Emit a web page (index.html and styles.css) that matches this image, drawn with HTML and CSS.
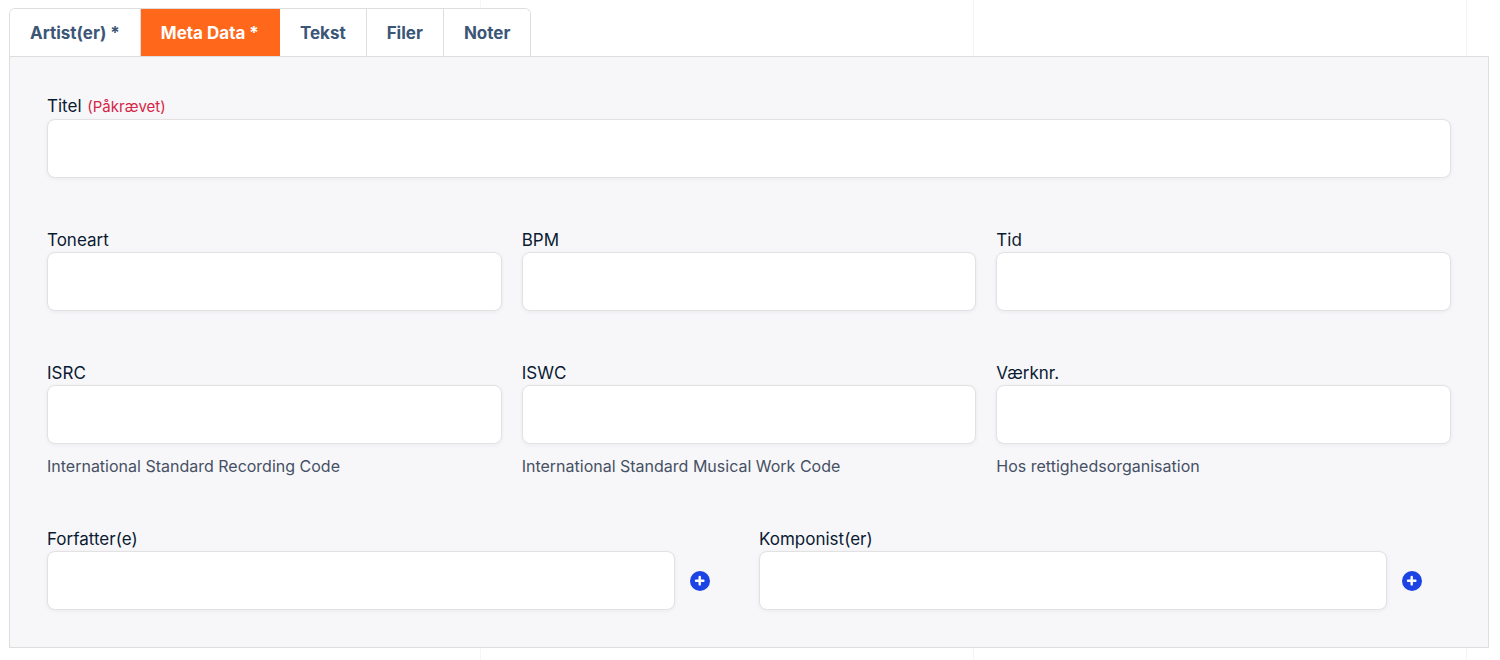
FILE: index.html
```html
<!DOCTYPE html>
<html lang="da">
<head>
<meta charset="utf-8">
<meta name="viewport" content="width=device-width, initial-scale=1">
<title>Meta Data</title>
<link rel="stylesheet" href="styles.css">
</head>
<body>
<main class="page">
  <div class="tabs" role="tablist">
    <button class="tab" type="button" role="tab" aria-selected="false">Artist(er) *</button>
    <button class="tab tab-active" type="button" role="tab" aria-selected="true" aria-controls="meta">Meta Data *</button>
    <button class="tab" type="button" role="tab" aria-selected="false">Tekst</button>
    <button class="tab" type="button" role="tab" aria-selected="false">Filer</button>
    <button class="tab" type="button" role="tab" aria-selected="false">Noter</button>
  </div>
  <form class="panel" id="meta">
    <div class="field">
      <label class="label" for="titel">Titel <span class="required">(Påkrævet)</span></label>
      <input class="input" id="titel" type="text" required>
    </div>
    <div class="row thirds">
      <div class="field">
        <label class="label" for="toneart">Toneart</label>
        <input class="input" id="toneart" type="text">
      </div>
      <div class="field">
        <label class="label" for="bpm">BPM</label>
        <input class="input" id="bpm" type="text">
      </div>
      <div class="field">
        <label class="label" for="tid">Tid</label>
        <input class="input" id="tid" type="text">
      </div>
    </div>
    <div class="row thirds">
      <div class="field">
        <label class="label" for="isrc">ISRC</label>
        <input class="input" id="isrc" type="text" aria-describedby="isrc-hint">
        <p class="hint" id="isrc-hint">International Standard Recording Code</p>
      </div>
      <div class="field">
        <label class="label" for="iswc">ISWC</label>
        <input class="input" id="iswc" type="text" aria-describedby="iswc-hint">
        <p class="hint" id="iswc-hint">International Standard Musical Work Code</p>
      </div>
      <div class="field">
        <label class="label" for="work">Værknr.</label>
        <input class="input" id="work" type="text" aria-describedby="work-hint">
        <p class="hint" id="work-hint">Hos rettighedsorganisation</p>
      </div>
    </div>
    <div class="row halves">
      <div class="field">
        <label class="label" for="author">Forfatter(e)</label>
        <div class="list-item">
          <input class="input" id="author" type="text">
          <button class="add" type="button" aria-label="Tilføj forfatter">
            <svg class="add-icon" viewBox="0 0 20 20" aria-hidden="true"><circle cx="10" cy="10" r="10" fill="#1c43e4"/><path d="M9.7 6v7.4M6 9.7h7.4" stroke="#fff" stroke-width="2.4" stroke-linecap="round"/></svg>
          </button>
        </div>
      </div>
      <div class="field">
        <label class="label" for="composer">Komponist(er)</label>
        <div class="list-item">
          <input class="input" id="composer" type="text">
          <button class="add" type="button" aria-label="Tilføj komponist">
            <svg class="add-icon" viewBox="0 0 20 20" aria-hidden="true"><circle cx="10" cy="10" r="10" fill="#1c43e4"/><path d="M9.7 6v7.4M6 9.7h7.4" stroke="#fff" stroke-width="2.4" stroke-linecap="round"/></svg>
          </button>
        </div>
      </div>
    </div>
  </form>
</main>
</body>
</html>
```
FILE: styles.css
```css
* {
  box-sizing: border-box;
}

body {
  margin: 0;
  font-family: Inter, "Liberation Sans", sans-serif;
  color: #0b1a33;
  background-color: #fff;
}

/* Faint vertical column guides behind the form */
.page {
  min-height: 100vh;
  padding: 8px 11px 12px 9px;
  background-image:
    linear-gradient(#f5f5f5, #f5f5f5),
    linear-gradient(#f5f5f5, #f5f5f5),
    linear-gradient(#f5f5f5, #f5f5f5);
  background-repeat: no-repeat;
  background-size: 1px 100%;
  background-position: 32% 0, 64.9% 0, 97.8% 0;
}

.tabs {
  display: flex;
  width: fit-content;
  border: 1px solid #dedede;
  border-bottom: 0;
  border-radius: 6px 6px 0 0;
  overflow: hidden;
  background: #fff;
}

.tab {
  padding: 2px 20px 0;
  border: 0;
  border-right: 1px solid #dedede;
  background: #fff;
  color: #3b5676;
  font: 700 17px/45px Inter, "Liberation Sans", sans-serif;
  cursor: pointer;
}

.tab:last-child {
  border-right: 0;
}

.tab-active {
  border-color: #ff681a;
  background: #ff681a;
  color: #fff;
}

.panel {
  display: flex;
  flex-direction: column;
  gap: 50px;
  padding: 37px;
  border: 1px solid #dedede;
  background: #f7f7f9;
}

.row {
  display: grid;
  gap: 20px;
}

.thirds {
  grid-template-columns: repeat(3, 1fr);
}

.halves {
  grid-template-columns: repeat(2, 1fr);
}

.field {
  display: flex;
  flex-direction: column;
  min-width: 0;
}

.label {
  font-size: 17px;
  line-height: 24px;
}

.required {
  margin-left: 1px;
  color: #d62545;
  font-size: 15px;
}

.input {
  width: 100%;
  min-width: 0;
  height: 59px;
  padding: 0 16px;
  border: 1px solid #e2e2e3;
  border-radius: 8px;
  background: #fff;
  box-shadow: 0 1px 4px rgba(18, 25, 97, 0.06);
  color: inherit;
  font: inherit;
}

.hint {
  margin: 11px 0 0;
  color: #465064;
  font-size: 16px;
  line-height: 22px;
}

.list-item {
  display: flex;
  align-items: center;
  gap: 15px;
  padding-right: 29px;
}

.add {
  flex: none;
  padding: 0;
  border: 0;
  border-radius: 50%;
  background: none;
  cursor: pointer;
}

.add-icon {
  display: block;
  width: 20px;
  height: 20px;
}
```
